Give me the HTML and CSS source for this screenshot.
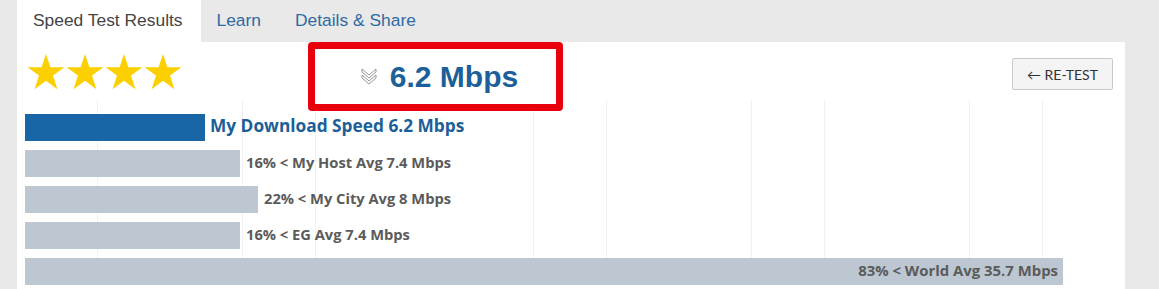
FILE: index.html
```html
<!DOCTYPE html>
<html lang="en">
<head>
    <meta charset="UTF-8">
    <meta name="viewport" content="width=device-width, initial-scale=1.0">
    <title>speed test results</title>
    <link rel="stylesheet" href="styles.css">
</head>
<body>
    <div class="results_wrapper">
        <ul class="tabs">
            <li class="active">Speed Test Results</li>
            <li>Learn</li>
            <li>Details &amp; Share</li>
        </ul>
        <div class="results_panel">
            <div class="results_header">
                <div class="stars">
                    <svg viewBox="0 0 24 23"><polygon points="12,0 14.8,8.5 23.8,8.5 16.5,13.8 19.3,22.5 12,17.1 4.7,22.5 7.5,13.8 0.2,8.5 9.2,8.5"/></svg>
                    <svg viewBox="0 0 24 23"><polygon points="12,0 14.8,8.5 23.8,8.5 16.5,13.8 19.3,22.5 12,17.1 4.7,22.5 7.5,13.8 0.2,8.5 9.2,8.5"/></svg>
                    <svg viewBox="0 0 24 23"><polygon points="12,0 14.8,8.5 23.8,8.5 16.5,13.8 19.3,22.5 12,17.1 4.7,22.5 7.5,13.8 0.2,8.5 9.2,8.5"/></svg>
                    <svg viewBox="0 0 24 23"><polygon points="12,0 14.8,8.5 23.8,8.5 16.5,13.8 19.3,22.5 12,17.1 4.7,22.5 7.5,13.8 0.2,8.5 9.2,8.5"/></svg>
                </div>
                <div class="speed_box">
                    <svg class="chevron" viewBox="0 0 16 19">
                        <path d="M1 2 L8 8 L15 2 L15 5 L8 11 L1 5 Z"/>
                        <path d="M1 8 L8 14 L15 8 L15 11 L8 17 L1 11 Z"/>
                    </svg>
                    <span class="speed_value">6.2 Mbps</span>
                </div>
                <button class="retest">&larr; RE-TEST</button>
            </div>
            <div class="chart">
                <div class="bar_row">
                    <div class="bar mine" style="width: 180px"></div>
                    <span class="bar_label mine_label">My Download Speed 6.2 Mbps</span>
                </div>
                <div class="bar_row">
                    <div class="bar" style="width: 215px"></div>
                    <span class="bar_label">16% &lt; My Host Avg 7.4 Mbps</span>
                </div>
                <div class="bar_row">
                    <div class="bar" style="width: 233px"></div>
                    <span class="bar_label">22% &lt; My City Avg 8 Mbps</span>
                </div>
                <div class="bar_row">
                    <div class="bar" style="width: 215px"></div>
                    <span class="bar_label">16% &lt; EG Avg 7.4 Mbps</span>
                </div>
                <div class="bar_row">
                    <div class="bar" style="width: 1038px">
                        <span class="bar_label inside">83% &lt; World Avg 35.7 Mbps</span>
                    </div>
                </div>
            </div>
        </div>
    </div>
</body>
</html>
```

FILE: styles.css
```css
*{
    padding: 0;
    margin: 0;
    box-sizing: border-box;
}

body{
    background: #e9e9e9;
    font-family: "Liberation Sans", Arial, sans-serif;
    height: 289px;
    overflow: hidden;
}

.results_wrapper{
    margin-left: 17px;
    width: 1108px;
}

.tabs{
    display: flex;
    list-style: none;
    height: 42px;
}

.tabs li{
    padding: 0 18px 0 16px;
    line-height: 40px;
    font-size: 17.4px;
    color: #2f6aa3;
}

.tabs li.active{
    background: #fff;
    color: #444;
}

.results_panel{
    background: #fff;
    padding: 0 12px 0 8px;
    height: 247px;
}

.results_header{
    display: flex;
    align-items: flex-start;
    height: 58px;
}

.stars{
    display: flex;
    gap: 1px;
    margin: 12px 0 0 2px;
}

.stars svg{
    width: 38px;
    height: 36px;
    fill: #fcd000;
}

.speed_box{
    position: relative;
    z-index: 1;
    display: flex;
    align-items: center;
    justify-content: center;
    gap: 13px;
    width: 255px;
    height: 69px;
    margin-left: 126px;
    padding-left: 8px;
    background: #fff;
    border: 7px solid #e8000c;
    border-radius: 4px;
}

.chevron{
    width: 16px;
    height: 19px;
    fill: none;
    stroke: #8a8a8a;
    stroke-width: 0.9;
}

.speed_value{
    font-size: 30px;
    font-weight: bold;
    color: #1c5f99;
}

.retest{
    margin: 16px 0 0 auto;
    width: 101px;
    height: 32px;
    background: #f4f4f4;
    border: 1px solid #c9c9c9;
    border-radius: 2px;
    font-family: Lato, "Open Sans", sans-serif;
    font-size: 14px;
    color: #333;
}

.chart{
    padding-top: 14px;
    background-image: repeating-linear-gradient(to right, transparent 0, transparent 72px, #f1f1f1 72px, #f1f1f1 72.7px);
    background-repeat: no-repeat;
    background-size: 1030px 100%;
}

.bar_row{
    display: flex;
    align-items: center;
    height: 27px;
    margin-bottom: 9px;
}

.bar{
    height: 27px;
    background: #bcc7d1;
    display: flex;
    align-items: center;
    justify-content: flex-end;
}

.bar.mine{
    background: #1866a6;
}

.bar_label{
    margin: 0 0 4px 6px;
    font-family: "Open Sans", sans-serif;
    font-weight: bold;
    font-size: 14.7px;
    color: #5b5b5b;
}

.bar_label.mine_label{
    margin-left: 5px;
    font-size: 17.3px;
    color: #1c5e97;
}

.bar_label.inside{
    margin: 0 5px 4px 0;
    font-size: 14.9px;
}
```
